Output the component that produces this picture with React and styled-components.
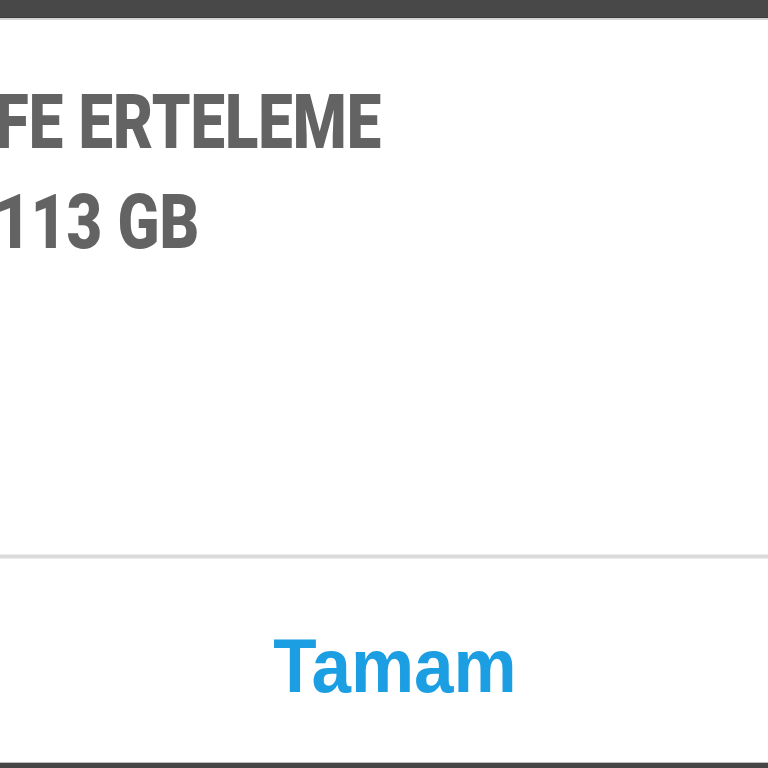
import React from "react";
import styled, { createGlobalStyle } from "styled-components";

const Global = createGlobalStyle`
  html, body { margin: 0; padding: 0; background: #ffffff; }
  #root { width: 768px; height: 768px; overflow: hidden; }
`;

const Dialog = styled.div`
  width: 768px;
  height: 768px;
  display: flex;
  flex-direction: column;
  background: #ffffff;
  overflow: hidden;
`;

const TopBar = styled.div`
  height: 17px;
  background: #484848;
  border-bottom: 1px solid #3a3a3a;
  box-shadow: 0 2px 0 #d4d4d4;
  margin-bottom: 2px;
  flex: none;
`;

const Body = styled.div`
  flex: 1;
  padding-top: 54px;
  margin-left: -5px;
`;

const InfoLine = styled.div`
  font-family: Roboto, "Liberation Sans", sans-serif;
  font-weight: 900;
  font-size: 70px;
  line-height: 100px;
  letter-spacing: 0;
  color: #636363;
  white-space: nowrap;
  transform: scale(0.88, 1.08);
  transform-origin: 0 74px;
`;

const Divider = styled.div`
  height: 5px;
  flex: none;
  background: linear-gradient(#f2f2f2, #d6d6d6 40%, #dcdcdc 70%, #f4f4f4);
`;

const ActionRow = styled.div`
  height: 203px;
  flex: none;
  display: flex;
  align-items: center;
  justify-content: center;
  padding-left: 22px;
  padding-top: 10px;
  box-sizing: border-box;
`;

const ActionButton = styled.button`
  border: none;
  background: transparent;
  padding: 0;
  font-family: "Liberation Sans", Arial, sans-serif;
  font-weight: 700;
  font-size: 71px;
  line-height: 78px;
  color: #1c9ee2;
  cursor: pointer;
  transform: scaleY(1.08);
`;

const BottomBar = styled.div`
  height: 5px;
  flex: none;
  background: #464646;
  border-top: 1px solid #bdbdbd;
`;

export default function App() {
  return (
    <>
      <Global />
      <Dialog>
        <TopBar />
        <Body>
          <InfoLine>FE ERTELEME</InfoLine>
          <InfoLine>113 GB</InfoLine>
        </Body>
        <Divider />
        <ActionRow>
          <ActionButton>Tamam</ActionButton>
        </ActionRow>
        <BottomBar />
      </Dialog>
    </>
  );
}
